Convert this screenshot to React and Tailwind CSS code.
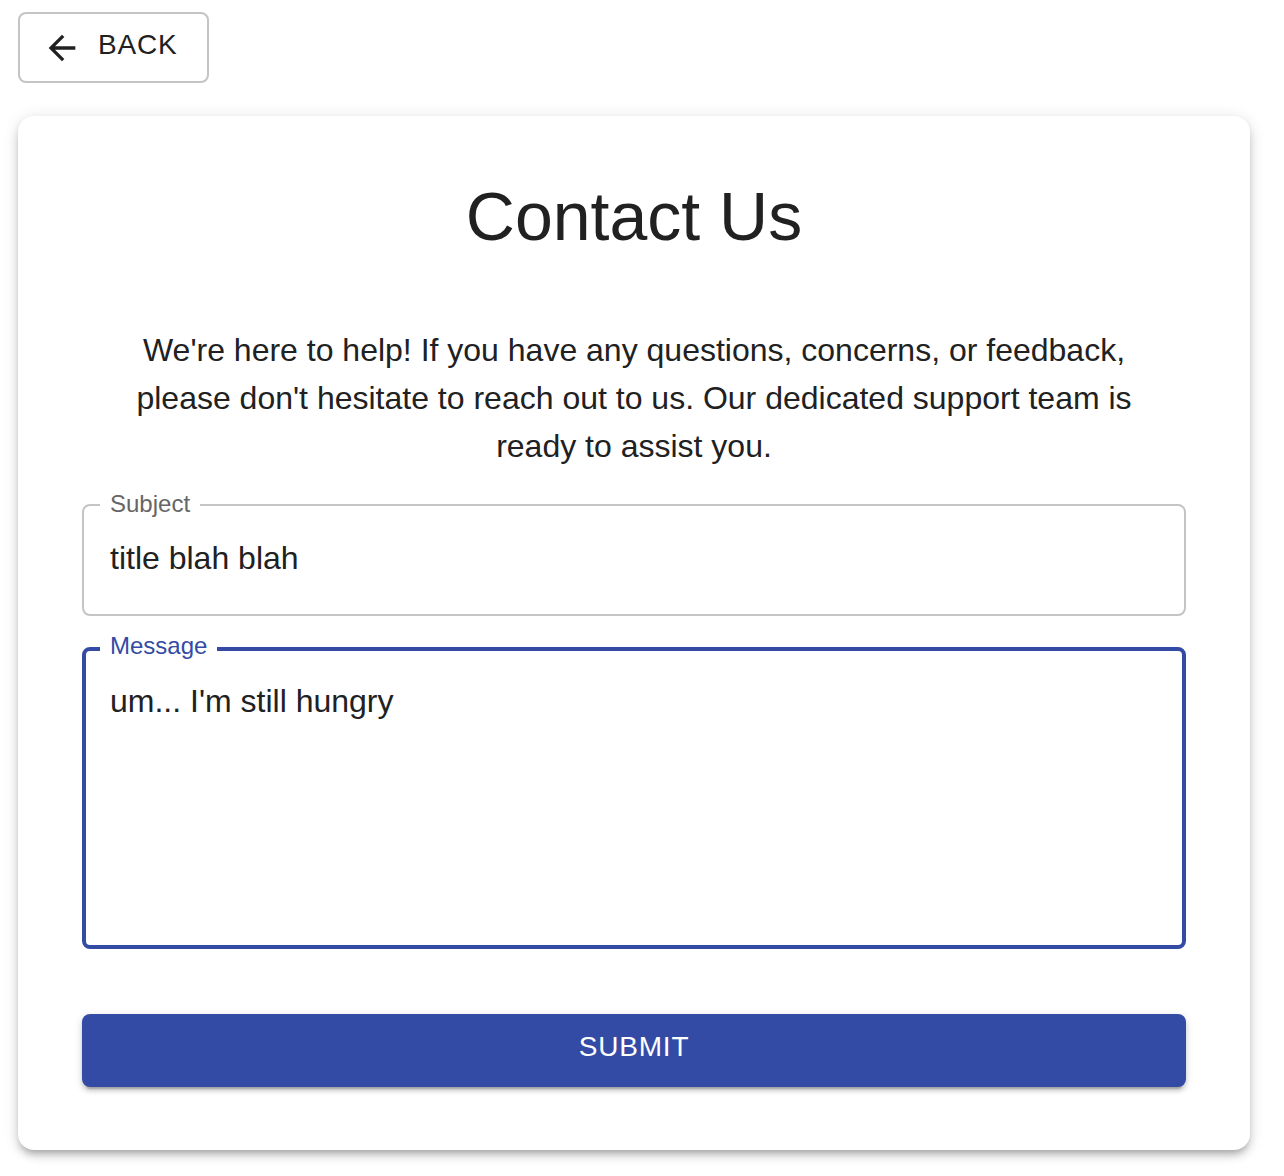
import { useState } from 'react';

const ArrowBack = () => (
  <svg viewBox="0 0 24 24" className="w-[40px] h-[40px] mt-[13.5px] mr-[16px] shrink-0" fill="currentColor">
    <path d="M20 11H7.83l5.59-5.59L12 4l-8 8 8 8 1.41-1.41L7.83 13H20v-2z" />
  </svg>
);

const ContactUs = () => {
  const [subject, setSubject] = useState('title blah blah');
  const [message, setMessage] = useState("um... I'm still hungry");

  return (
    <div className="min-h-screen bg-white pt-[12px] pl-[18px] pb-[26px] text-[#212121] font-['Liberation_Sans',Arial,sans-serif]">
      {/* back button */}
      <button className="flex h-[71px] pl-[22px] pr-[30px] border-2 border-[#c4c4c4] rounded-[8px] text-[#212121] bg-white">
        <ArrowBack />
        <span className="mt-[17px] text-[28px] leading-[28px] tracking-[0.8px]">BACK</span>
      </button>

      <div className="mt-[33px] w-[1232px] bg-white rounded-[16px] px-[64px] pt-[58px] pb-[63px] shadow-[0_6px_6px_-4px_rgba(0,0,0,0.2),0_6px_8px_0_rgba(0,0,0,0.14),0_2px_16px_0_rgba(0,0,0,0.12)]">
        <h1 className="text-center text-[68px] leading-[84px] font-normal">Contact Us</h1>

        <p className="mt-[68px] text-center text-[32px] leading-[48px]">
          We're here to help! If you have any questions, concerns, or feedback,
          <br />
          please don't hesitate to reach out to us. Our dedicated support team is
          <br />
          ready to assist you.
        </p>

        {/* subject */}
        <div className="relative mt-[34px] h-[112px] border-2 border-[#c4c4c4] rounded-[8px] pl-[26px] pr-[26px] pt-[29px]">
          <span className="absolute top-[-14px] left-[16px] bg-white px-[10px] text-[24px] leading-[24px] text-[#666666]">
            Subject
          </span>
          <input
            value={subject}
            onChange={(e) => setSubject(e.target.value)}
            className="w-full h-[46px] bg-transparent outline-none text-[32px] leading-[46px] text-[#212121]"
          />
        </div>

        {/* message, focused */}
        <div className="relative mt-[31px] h-[302px] border-4 border-[#334ba5] rounded-[8px] pl-[24px] pr-[24px] pt-[27px]">
          <span className="absolute top-[-17px] left-[14px] bg-white px-[10px] text-[24px] leading-[24px] text-[#334ba5]">
            Message
          </span>
          <textarea
            value={message}
            onChange={(e) => setMessage(e.target.value)}
            rows={5}
            className="w-full h-[230px] resize-none bg-transparent outline-none text-[32px] leading-[46px] text-[#212121]"
          />
        </div>

        <button className="mt-[65px] w-full h-[73px] pt-[19px] rounded-[8px] bg-[#334ba5] text-white text-[28px] leading-[28px] tracking-[0.8px] flex justify-center items-start shadow-[0_6px_2px_-4px_rgba(0,0,0,0.2),0_4px_4px_0_rgba(0,0,0,0.14),0_2px_10px_0_rgba(0,0,0,0.12)]">
          SUBMIT
        </button>
      </div>
    </div>
  );
};

export default function App() {
  return <ContactUs />;
}
